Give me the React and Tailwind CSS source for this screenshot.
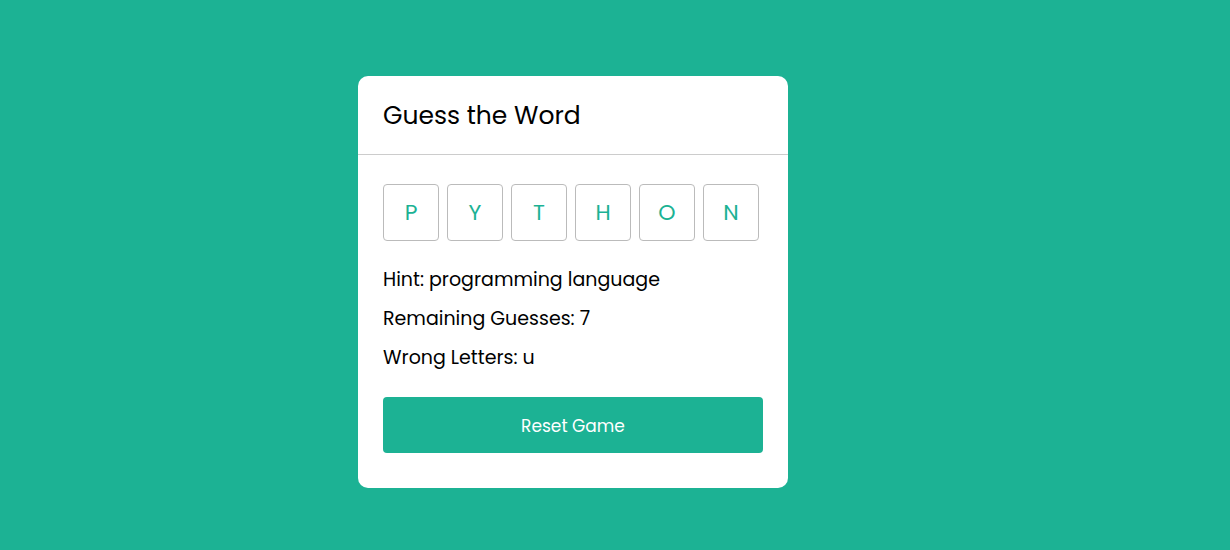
export default function App() {
  const letters = ["P", "Y", "T", "H", "O", "N"];
  return (
    <div
      className="w-full h-[550px] bg-[#1cb294] pt-[76px] pl-[358px]"
      style={{ fontFamily: "Poppins, 'Open Sans', Lato, sans-serif" }}
    >
      <div className="w-[430px] h-[412px] bg-white rounded-[10px] overflow-hidden">
        <div className="h-[79px] border-b border-[#cccccc] px-[25px] flex items-center">
          <h1 className="text-[25px] text-black font-normal leading-none">Guess the Word</h1>
        </div>
        <div className="px-[25px] pt-[29px]">
          <div className="flex gap-[8px]">
            {letters.map((l) => (
              <div
                key={l}
                className="w-[56px] h-[57px] border border-[#bbbbbb] rounded-[4px] flex items-center justify-center text-[22px] text-[#1cb294]"
              >
                {l}
              </div>
            ))}
          </div>
          <div className="mt-[25px] flex flex-col gap-[11px] text-[19px] text-black leading-[28px]">
            <p>Hint: programming language</p>
            <p>Remaining Guesses: 7</p>
            <p>Wrong Letters: u</p>
          </div>
          <button className="mt-[25px] w-[380px] h-[56px] bg-[#1cb294] rounded-[4px] text-white text-[17px] flex items-center justify-center pt-[3px]">
            Reset Game
          </button>
        </div>
      </div>
    </div>
  );
}
